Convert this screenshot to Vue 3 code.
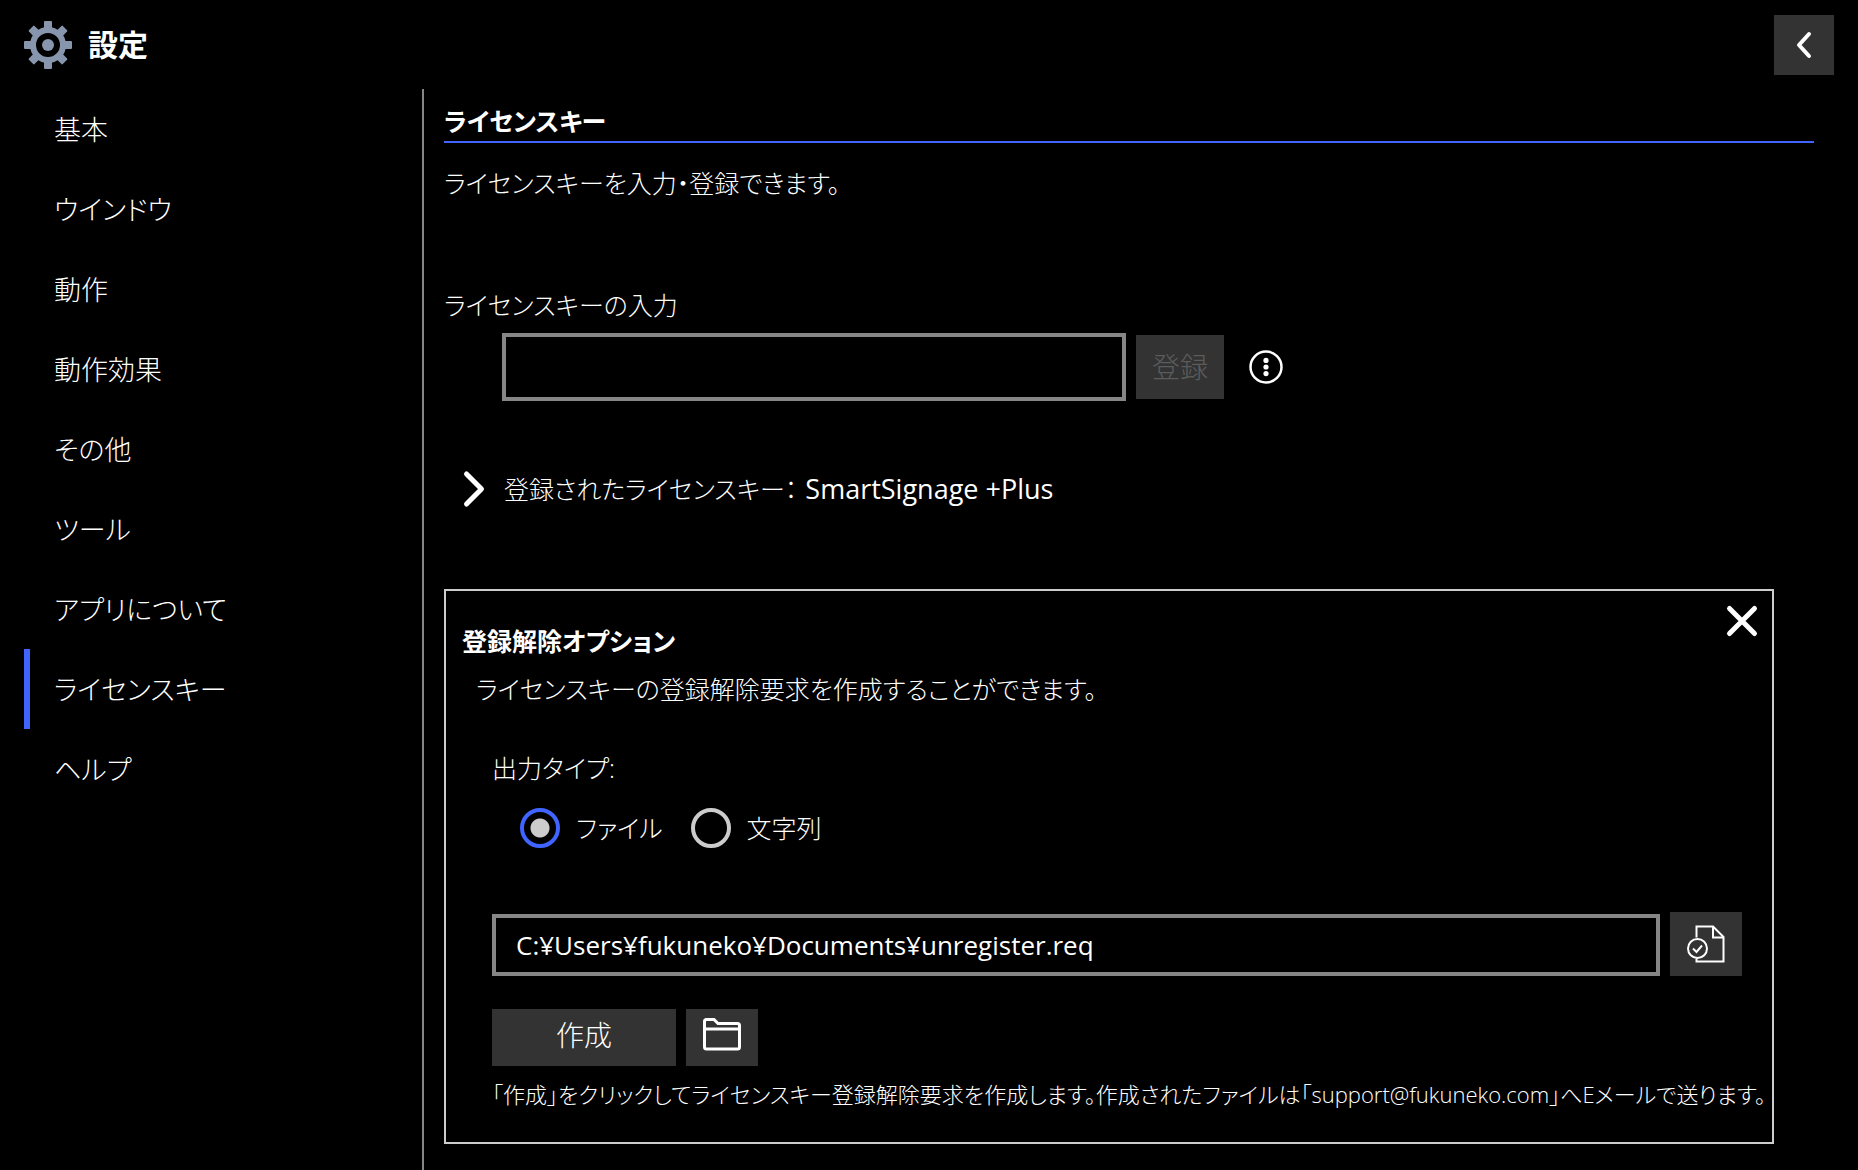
<script setup>
import { ref } from 'vue'

const menu = ['基本', 'ウインドウ', '動作', '動作効果', 'その他', 'ツール', 'アプリについて', 'ライセンスキー', 'ヘルプ']
const current = ref('ライセンスキー')
const licenseKey = ref('')
const outputType = ref('file')
const path = ref('C:¥Users¥fukuneko¥Documents¥unregister.req')
const teeth = [0, 45, 90, 135, 180, 225, 270, 315]
</script>

<template>
  <div class="app">
    <header class="header">
      <svg class="gear" viewBox="0 0 48 48" aria-hidden="true">
        <rect v-for="a in teeth" :key="a" x="20" y="0" width="8" height="10" rx="1" :transform="`rotate(${a} 24 24)`" />
        <circle cx="24" cy="24" r="15" class="ring" />
        <circle cx="24" cy="24" r="6" />
      </svg>
      <h1>設定</h1>
      <button class="btn back" type="button" aria-label="戻る">
        <svg width="60" height="60" viewBox="0 0 60 60"><path d="M35 19 25 30l10 11" class="stroke" /></svg>
      </button>
    </header>

    <div class="body">
      <nav class="menu">
        <a v-for="item in menu" :key="item" href="#" :class="{ active: item === current }" @click.prevent="current = item">{{ item }}</a>
      </nav>

      <main class="content">
        <h2>ライセンスキー</h2>
        <p class="lead">ライセンスキーを入力・登録できます。</p>

        <label class="key-label" for="key">ライセンスキーの入力</label>
        <div class="key-row">
          <input id="key" v-model="licenseKey" class="box key-box" type="text">
          <button class="btn register" type="button" disabled>登録</button>
          <button class="plain" type="button" aria-label="その他のオプション">
            <svg width="36" height="36" viewBox="0 0 36 36">
              <circle cx="18" cy="18" r="15.5" fill="none" stroke="#fff" stroke-width="2.5" />
              <g fill="#fff"><circle cx="18" cy="11.4" r="2.6" /><circle cx="18" cy="18" r="2.6" /><circle cx="18" cy="24.6" r="2.6" /></g>
            </svg>
          </button>
        </div>

        <button class="plain registered" type="button">
          <svg width="24" height="40" viewBox="0 0 24 40"><path d="M4.500 5 19.500 20 4.500 35" class="stroke bold" /></svg>
          <span>登録されたライセンスキー：</span>
          <span class="product">SmartSignage +Plus</span>
        </button>

        <section class="panel">
          <button class="plain close" type="button" aria-label="閉じる">
            <svg width="36" height="36" viewBox="0 0 36 36"><path d="M5.500 5.500 30.500 30.500M30.500 5.500 5.500 30.500" class="stroke bold" /></svg>
          </button>
          <h3>登録解除オプション</h3>
          <p class="panel-lead">ライセンスキーの登録解除要求を作成することができます。</p>

          <fieldset>
            <legend>出力タイプ:</legend>
            <div class="radios">
              <label><input v-model="outputType" type="radio" name="output" value="file">ファイル</label>
              <label><input v-model="outputType" type="radio" name="output" value="text">文字列</label>
            </div>
          </fieldset>

          <div class="path-row">
            <input v-model="path" class="box path-box" type="text" aria-label="出力先">
            <button class="btn pick" type="button" aria-label="ファイルを選択">
              <svg width="40" height="40" viewBox="0 0 40 40" class="line">
                <path d="M10.500 13.500V2.500H27L37.500 13V37.500H10.500V34.500" />
                <path d="M27 2.500V13.500H37.500" />
                <circle cx="11.500" cy="24.500" r="9.500" />
                <path d="M7 24.500 10.500 28 16 21.500" />
              </svg>
            </button>
          </div>

          <div class="actions">
            <button class="btn create" type="button">作成</button>
            <button class="btn folder" type="button" aria-label="フォルダーを開く">
              <svg width="40" height="36" viewBox="0 0 40 36" class="line thick">
                <path d="M2.500 4.500Q2.500 2.500 4.500 2.500H12L16 6.500H35.500Q37.500 6.500 37.500 8.500V30Q37.500 32 35.500 32H4.500Q2.500 32 2.500 30ZM2.500 12H37.500" />
              </svg>
            </button>
          </div>
          <p class="note">「作成」をクリックしてライセンスキー登録解除要求を作成します。作成されたファイルは「support@fukuneko.com」へEメールで送ります。</p>
        </section>
      </main>
    </div>
  </div>
</template>

<style>
body {
  margin: 0;
  background: #000;
}
</style>

<style scoped>
.app {
  display: flex;
  flex-direction: column;
  min-height: 100vh;
  box-sizing: border-box;
  background: #000;
  color: #fff;
  font-family: "Open Sans", "Noto Sans CJK JP", sans-serif;
  font-size: 25px;
  font-weight: 300;
  font-feature-settings: "palt";
  line-height: 40px;
}
h1, h2, h3, p, fieldset, legend {
  margin: 0;
  padding: 0;
  border: 0;
}
button, input {
  box-sizing: border-box;
  font: inherit;
  font-feature-settings: inherit;
  color: inherit;
}
svg {
  display: block;
}
.stroke {
  fill: none;
  stroke: #fff;
  stroke-width: 4;
  stroke-linecap: round;
  stroke-linejoin: round;
}
.stroke.bold {
  stroke-width: 5;
}
.line {
  fill: none;
  stroke: #fff;
  stroke-width: 2;
}
.line.thick {
  stroke-width: 3;
}
.header {
  display: flex;
  align-items: center;
  height: 89px;
  box-sizing: border-box;
  padding: 0 24px;
}
.gear {
  width: 48px;
  height: 48px;
  fill: #8795ad;
}
.gear .ring {
  fill: none;
  stroke: #8795ad;
  stroke-width: 6;
}
h1 {
  margin-left: 16px;
  font-size: 30px;
}
.btn {
  display: flex;
  align-items: center;
  justify-content: center;
  padding: 0;
  border: 0;
  background: #333;
}
.plain {
  display: flex;
  align-items: center;
  padding: 0;
  border: 0;
  background: none;
}
.back {
  margin-left: auto;
}
.body {
  display: flex;
  flex: 1;
}
.menu {
  display: flex;
  flex-direction: column;
  flex: 0 0 398px;
  margin-left: 24px;
  border-right: 2px solid #868686;
}
.menu a {
  padding: 2px 0 0 24px;
  border-left: 6px solid transparent;
  color: #fff;
  font-size: 27px;
  line-height: 78px;
  text-decoration: none;
}
.menu a.active {
  border-color: #4064ff;
}
.content {
  flex: 1;
  min-width: 0;
  padding: 12px 44px 24px 20px;
}
h2 {
  border-bottom: 2px solid #4064ff;
  font-size: 25px;
}
.lead {
  margin-top: 20px;
}
.key-label {
  display: block;
  margin-top: 82px;
}
.key-row {
  display: flex;
  align-items: center;
  margin: 8px 0 0 58px;
}
.box {
  border: 4px solid #868686;
  padding: 0 20px;
  background: #000;
  font-size: 26px;
  font-weight: 400;
  outline: 0;
}
.key-box {
  width: 624px;
  height: 68px;
}
.register {
  width: 88px;
  height: 64px;
  margin: 0 24px 0 10px;
  color: #5c5c5c;
  font-size: 28px;
}
.registered {
  gap: 8px;
  margin: 68px 0 0 18px;
}
.registered svg {
  margin-right: 10px;
}
.product {
  font-size: 27px;
  font-weight: 400;
}
.panel {
  position: relative;
  margin: 80px 40px 0 0;
  padding: 30px 30px 28px 46px;
  border: 2px solid #ccc;
}
.close {
  position: absolute;
  top: 12px;
  right: 12px;
}
h3 {
  margin-left: -30px;
  font-size: 25px;
}
.panel-lead {
  margin: 8px 0 0 -16px;
}
fieldset {
  margin-top: 39px;
}
.radios {
  display: flex;
  gap: 28px;
  margin: 20px 0 0 28px;
}
.radios label {
  display: flex;
  align-items: center;
  gap: 16px;
}
.radios input {
  appearance: none;
  width: 40px;
  height: 40px;
  margin: 0;
  border: 4px solid #ccc;
  border-radius: 50%;
}
.radios input:checked {
  border-color: #4064ff;
  background: radial-gradient(circle, #ccc 0 9px, transparent 10px);
}
.path-row {
  display: flex;
  align-items: flex-end;
  gap: 10px;
  margin-top: 64px;
}
.path-box {
  flex: 1;
  min-width: 0;
  height: 62px;
}
.pick {
  width: 72px;
  height: 64px;
}
.actions {
  display: flex;
  gap: 10px;
  margin-top: 33px;
}
.actions .btn {
  height: 57px;
  padding-bottom: 6px;
}
.create {
  width: 184px;
  font-size: 28px;
}
.folder {
  width: 72px;
}
.note {
  margin: 8px -30px 0 0;
  font-size: 22px;
}
</style>
